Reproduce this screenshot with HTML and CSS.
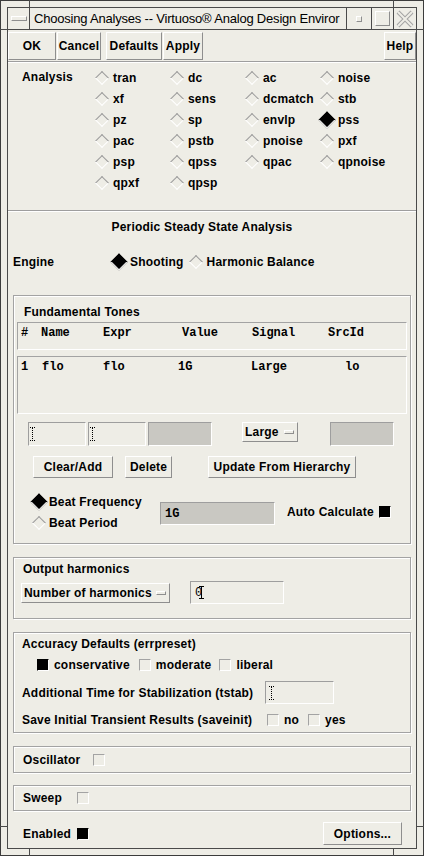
FILE: index.html
```html
<!DOCTYPE html>
<html lang="en">
<head>
<meta charset="utf-8">
<title>Choosing Analyses</title>
<link rel="stylesheet" href="styles.css">
</head>
<body>
<div class="frame">
  <span class="mark mark-t1"></span>
  <span class="mark mark-t2"></span>
  <span class="mark mark-b1"></span>
  <span class="mark mark-b2"></span>
  <span class="mark mark-l1"></span>
  <span class="mark mark-l2"></span>
  <span class="mark mark-r1"></span>
  <span class="mark mark-r2"></span>
  <div class="win">
    <div class="titlebar">
      <div class="tb-menu"><span class="tb-menu-bar"></span></div>
      <div class="tb-title">Choosing Analyses -- Virtuoso® Analog Design Enviror</div>
      <div class="tb-btn tb-btn-min"><span class="tb-min"></span></div>
      <div class="tb-btn"><span class="tb-max"></span></div>
      <div class="tb-btn tb-btn-close"><svg class="tb-x" width="18" height="18" viewBox="0 0 18 18"><path d="M2 2L16 16M16 2L2 16" stroke="#a3a3a3" stroke-width="4" fill="none"/><path d="M2 2L16 16M16 2L2 16" stroke="#eeede6" stroke-width="2" fill="none"/></svg></div>
    </div>
    <div class="content">
      <div class="actions">
        <div class="btn btn-ok">OK</div>
        <div class="btn btn-cancel">Cancel</div>
        <div class="btn btn-defaults">Defaults</div>
        <div class="btn btn-apply">Apply</div>
        <div class="btn btn-help">Help</div>
      </div>
      <div class="sep sep-top"></div>

      <div class="analysis">
        <div class="an-label">Analysis</div>
        <div class="an-grid">
          <div class="opt"><span class="radio"></span>tran</div>
          <div class="opt"><span class="radio"></span>dc</div>
          <div class="opt"><span class="radio"></span>ac</div>
          <div class="opt"><span class="radio"></span>noise</div>
          <div class="opt"><span class="radio"></span>xf</div>
          <div class="opt"><span class="radio"></span>sens</div>
          <div class="opt"><span class="radio"></span>dcmatch</div>
          <div class="opt"><span class="radio"></span>stb</div>
          <div class="opt"><span class="radio"></span>pz</div>
          <div class="opt"><span class="radio"></span>sp</div>
          <div class="opt"><span class="radio"></span>envlp</div>
          <div class="opt"><span class="radio on"></span>pss</div>
          <div class="opt"><span class="radio"></span>pac</div>
          <div class="opt"><span class="radio"></span>pstb</div>
          <div class="opt"><span class="radio"></span>pnoise</div>
          <div class="opt"><span class="radio"></span>pxf</div>
          <div class="opt"><span class="radio"></span>psp</div>
          <div class="opt"><span class="radio"></span>qpss</div>
          <div class="opt"><span class="radio"></span>qpac</div>
          <div class="opt"><span class="radio"></span>qpnoise</div>
          <div class="opt"><span class="radio"></span>qpxf</div>
          <div class="opt"><span class="radio"></span>qpsp</div>
        </div>
      </div>
      <div class="sep sep-mid"></div>

      <div class="heading">Periodic Steady State Analysis</div>

      <div class="engine">
        <div class="engine-label">Engine</div>
        <div class="opt"><span class="radio on"></span>Shooting</div>
        <div class="opt opt-hb"><span class="radio"></span>Harmonic Balance</div>
      </div>

      <div class="group group-tones">
        <div class="group-title tones-title">Fundamental Tones</div>
        <div class="tbl tbl-head">
          <span>#</span><span>Name</span><span>Expr</span><span>Value</span><span>Signal</span><span>SrcId</span>
        </div>
        <div class="tbl tbl-data">
          <span>1</span><span>flo</span><span>flo</span><span>1G</span><span>Large</span><span>lo</span>
        </div>
        <div class="tone-inputs">
          <div class="field f-name"><svg class="caret" width="5" height="14" viewBox="0 0 5 14"><path d="M0 .5H5M0 13.5H5" stroke="#000" stroke-width="1" stroke-dasharray="1 1"/><path d="M2.5 1V13" stroke="#000" stroke-width="1" stroke-dasharray="1 1"/></svg></div>
          <div class="field f-expr"><svg class="caret" width="5" height="14" viewBox="0 0 5 14"><path d="M0 .5H5M0 13.5H5" stroke="#000" stroke-width="1" stroke-dasharray="1 1"/><path d="M2.5 1V13" stroke="#000" stroke-width="1" stroke-dasharray="1 1"/></svg></div>
          <div class="field grey f-value"></div>
          <div class="menubtn mb-large">Large<span class="mb-ind"></span></div>
          <div class="field grey f-src"></div>
        </div>
        <div class="tone-btns">
          <div class="btn btn-sm btn-clear">Clear/Add</div>
          <div class="btn btn-sm btn-delete">Delete</div>
          <div class="btn btn-sm btn-update">Update From Hierarchy</div>
        </div>
        <div class="beat">
          <div class="beat-radios">
            <div class="opt"><span class="radio on"></span>Beat Frequency</div>
            <div class="opt"><span class="radio"></span>Beat Period</div>
          </div>
          <div class="field grey f-beat"><span class="mono">1G</span></div>
          <div class="autocalc">Auto Calculate<span class="chk on"></span></div>
        </div>
      </div>

      <div class="group group-out">
        <div class="group-title">Output harmonics</div>
        <div class="out-row">
          <div class="menubtn mb-harm">Number of harmonics<span class="mb-ind"></span></div>
          <div class="field f-harm"><span class="harm-val">0</span><svg class="ibeam" width="5" height="13" viewBox="0 0 5 13"><path d="M0 .5H5M0 12.5H5M2.5 0V13" stroke="#000" stroke-width="1"/></svg></div>
        </div>
      </div>

      <div class="group group-acc">
        <div class="group-title">Accuracy Defaults (errpreset)</div>
        <div class="acc-row">
          <span class="chk on"></span><span class="chk-text t-cons">conservative</span>
          <span class="chk"></span><span class="chk-text t-mod">moderate</span>
          <span class="chk"></span><span class="chk-text">liberal</span>
        </div>
        <div class="tstab-row">
          <span class="lbl-tstab">Additional Time for Stabilization (tstab)</span>
          <div class="field f-tstab"><svg class="caret" width="5" height="14" viewBox="0 0 5 14"><path d="M0 .5H5M0 13.5H5" stroke="#000" stroke-width="1" stroke-dasharray="1 1"/><path d="M2.5 1V13" stroke="#000" stroke-width="1" stroke-dasharray="1 1"/></svg></div>
        </div>
        <div class="save-row">
          <span class="lbl-save">Save Initial Transient Results (saveinit)</span>
          <span class="chk"></span><span class="chk-text t-no">no</span>
          <span class="chk"></span><span class="chk-text">yes</span>
        </div>
      </div>

      <div class="group group-osc">
        <span class="lbl-osc">Oscillator</span><span class="chk"></span>
      </div>

      <div class="group group-sweep">
        <span class="lbl-sweep">Sweep</span><span class="chk"></span>
      </div>

      <div class="bottom-row">
        <span class="lbl-sweep">Enabled</span><span class="chk on"></span>
        <div class="btn btn-options">Options...</div>
      </div>
    </div>
  </div>
</div>
</body>
</html>
```

FILE: styles.css
```css
* { box-sizing: border-box; margin: 0; padding: 0; }
html, body { width: 424px; height: 856px; overflow: hidden; }
body {
  background: #eeede6;
  font-family: "Liberation Sans", Arial, sans-serif;
  font-size: 12px;
  font-weight: bold;
  letter-spacing: 0.2px;
  color: #000;
}

/* window frame */
.frame {
  position: relative;
  width: 424px;
  height: 856px;
  border: 1px solid #3c3c3c;
  padding: 6px;
  background: #eeede6;
}
.mark { position: absolute; background: #4a4a4a; }
.mark-t1 { left: 28px; top: -1px; width: 1px; height: 7px; }
.mark-t2 { left: 392px; top: -1px; width: 1px; height: 7px; }
.mark-b1 { left: 28px; bottom: -1px; width: 1px; height: 7px; }
.mark-b2 { left: 392px; bottom: -1px; width: 1px; height: 7px; }
.mark-l1 { left: -1px; top: 28px; width: 7px; height: 1px; }
.mark-l2 { left: -1px; bottom: 28px; width: 7px; height: 1px; }
.mark-r1 { right: -1px; top: 28px; width: 7px; height: 1px; }
.mark-r2 { right: -1px; bottom: 28px; width: 7px; height: 1px; }

.win {
  height: 100%;
  border: 1px solid #4a4a4a;
  display: flex;
  flex-direction: column;
}

/* title bar */
.titlebar {
  display: flex;
  height: 22px;
  border-bottom: 1px solid #4a4a4a;
  flex: none;
}
.tb-menu {
  width: 22px;
  border-right: 1px solid #4a4a4a;
  display: flex;
  align-items: center;
  justify-content: center;
}
.tb-menu-bar {
  width: 16px;
  height: 5px;
  border: 1px solid;
  border-color: #fff #8e8e8e #8e8e8e #fff;
}
.tb-title {
  flex: 1;
  min-width: 0;
  padding-left: 4px;
  font-weight: normal;
  font-size: 13px;
  letter-spacing: -0.2px;
  line-height: 21px;
  white-space: nowrap;
  overflow: hidden;
}
.tb-btn {
  width: 22px;
  border-left: 1px solid #4a4a4a;
  display: flex;
  align-items: center;
  justify-content: center;
  flex: none;
}
.tb-btn-min { width: 25px; }
.tb-btn-close { width: 23px; }
.tb-min {
  width: 6px;
  height: 6px;
  border: 1px solid;
  border-color: #fff #8e8e8e #8e8e8e #fff;
}
.tb-max {
  width: 15px;
  height: 15px;
  border: 1px solid;
  border-color: #fff #8e8e8e #8e8e8e #fff;
}

/* content */
.content {
  flex: 1;
  display: flex;
  flex-direction: column;
}

.btn {
  display: flex;
  align-items: center;
  justify-content: center;
  border: 1px solid;
  border-color: #fff #8e8e8e #8e8e8e #fff;
  white-space: nowrap;
  flex: none;
}

.actions {
  display: flex;
  height: 28px;
  margin-top: 2px;
  flex: none;
}
.btn-ok { width: 48px; }
.btn-cancel { width: 44px; margin-left: 1px; }
.btn-defaults { width: 56px; margin-left: 5px; }
.btn-apply { width: 40px; margin-left: 1px; }
.btn-help { width: 32px; margin-left: auto; }

.sep {
  height: 2px;
  border-top: 1px solid #9e9e9e;
  border-bottom: 1px solid #fff;
  flex: none;
}
.sep-top { margin-top: 1px; }
.sep-mid { margin-top: 17px; }

/* analysis grid */
.analysis {
  display: flex;
  margin-top: 4px;
  padding-left: 14px;
}
.an-label { width: 73px; line-height: 21px; }
.an-grid {
  display: grid;
  grid-template-columns: repeat(4, 75px);
  grid-auto-rows: 21px;
}
.opt {
  display: flex;
  align-items: center;
  white-space: nowrap;
}
.radio {
  width: 13px;
  height: 13px;
  display: inline-flex;
  align-items: center;
  justify-content: center;
  flex: none;
  margin-right: 5px;
}
.radio::before {
  content: "";
  width: 8px;
  height: 8px;
  transform: rotate(45deg);
  border: 1px solid;
  border-color: #9b9b9b #fff #fff #9b9b9b;
}
.radio.on::before {
  width: 10px;
  height: 10px;
  background: #000;
  border-color: #000 #fff #fff #000;
}

.heading {
  margin-top: 7px;
  line-height: 16px;
  text-align: center;
  padding-right: 20px;
}

.engine {
  display: flex;
  align-items: center;
  height: 20px;
  margin-top: 17px;
  padding-left: 5px;
}
.engine-label { width: 99px; }
.opt-hb { margin-left: 6px; }
.opt-hb .radio { margin-right: 4px; }

/* group boxes */
.group {
  margin: 0 5px;
  border: 1px solid #a3a3a3;
  box-shadow: inset 1px 1px 0 #fff, 1px 1px 0 #fff;
  flex: none;
}
.group-title { line-height: 16px; padding-left: 9px; margin-top: 3px; }

.group-tones { margin-top: 23px; padding-bottom: 10px; }
.tones-title { margin-top: 8px; padding-left: 10px; }

.tbl {
  margin: 2px 3px 0;
  border: 1px solid;
  border-color: #a3a3a3 #fff #fff #a3a3a3;
  display: grid;
  font-family: "Liberation Mono", "Courier New", monospace;
  font-size: 12px;
  letter-spacing: 0;
  line-height: 14px;
  padding-left: 3px;
  padding-top: 3px;
}
.tbl-head {
  height: 28px;
  grid-template-columns: 20px 62px 79px 70px 76px auto;
}
.tbl-data {
  margin-top: 6px;
  height: 58px;
  grid-template-columns: 21px 61px 75px 73px 94px auto;
  align-content: start;
}

.tone-inputs {
  display: flex;
  align-items: flex-start;
  margin-top: 8px;
  padding-left: 14px;
}
.field {
  height: 24px;
  border: 1px solid;
  border-color: #9e9e9e #fff #fff #9e9e9e;
  flex: none;
  display: flex;
  align-items: center;
}
.field.grey { background: #c9c8c2; }
.caret { display: block; margin-left: 1px; }
.f-name { width: 58px; }
.f-expr { width: 58px; margin-left: 2px; }
.f-value { width: 64px; margin-left: 2px; }
.f-src { width: 64px; margin-left: 32px; }

.menubtn {
  display: flex;
  align-items: center;
  height: 20px;
  border: 1px solid;
  border-color: #fff #8e8e8e #8e8e8e #fff;
  padding-left: 2px;
  white-space: nowrap;
  flex: none;
}
.mb-ind {
  width: 10px;
  height: 4px;
  border: 1px solid;
  border-color: #fff #8e8e8e #8e8e8e #fff;
  margin-left: 5px;
}
.mb-large { width: 56px; margin-left: 30px; }

.tone-btns {
  display: flex;
  height: 22px;
  margin-top: 10px;
  padding-left: 19px;
}
.btn-clear { width: 80px; }
.btn-delete { width: 47px; margin-left: 12px; }
.btn-update { width: 148px; margin-left: 36px; }

.beat {
  display: flex;
  align-items: flex-start;
  margin-top: 13px;
  padding-left: 18px;
}
.beat-radios {
  width: 128px;
  display: grid;
  grid-auto-rows: 21px;
}
.beat-radios .radio { margin-right: 4px; }
.f-beat {
  width: 115px;
  height: 23px;
  margin-top: 11px;
  padding-left: 4px;
}
.mono {
  font-family: "Liberation Mono", "Courier New", monospace;
  letter-spacing: 0;
}
.autocalc {
  display: flex;
  align-items: center;
  margin-left: 12px;
  margin-top: 14px;
}
.autocalc .chk { margin-left: 5px; }

.chk {
  display: inline-block;
  width: 12px;
  height: 12px;
  border: 1px solid;
  border-color: #a3a3a3 #fff #fff #a3a3a3;
  flex: none;
}
.chk.on { background: #000; border-color: #000 #fff #fff #000; }

.group-out { margin-top: 13px; padding-bottom: 14px; }
.out-row {
  display: flex;
  align-items: center;
  margin-top: 4px;
  padding-left: 7px;
  height: 23px;
}
.mb-harm { width: 149px; }
.mb-harm .mb-ind { margin-left: 4px; }
.f-harm { width: 94px; height: 23px; margin-left: 20px; padding-left: 4px; }
.harm-val { font-family: "Liberation Mono", monospace; letter-spacing: 0; font-weight: normal; }
.ibeam { display: block; margin-left: -3px; }

.group-acc { margin-top: 13px; padding-bottom: 4px; }
.group-acc .group-title { padding-left: 8px; }
.acc-row {
  display: flex;
  align-items: center;
  height: 16px;
  margin-top: 5px;
  padding-left: 23px;
}
.chk-text { margin-left: 5px; }
.t-cons { margin-right: 9px; }
.t-mod { margin-right: 8px; }

.tstab-row {
  display: flex;
  align-items: center;
  margin-top: 8px;
  padding-left: 8px;
  height: 23px;
}
.lbl-tstab { width: 243px; }
.f-tstab { width: 69px; height: 23px; padding-left: 2px; }

.save-row {
  display: flex;
  align-items: center;
  height: 16px;
  margin-top: 8px;
  padding-left: 8px;
}
.lbl-save { width: 245px; white-space: nowrap; }
.t-no { margin-right: 9px; }

.group-osc, .group-sweep {
  display: flex;
  align-items: center;
  padding-left: 9px;
}
.group-osc { margin-top: 13px; height: 27px; }
.group-sweep { margin-top: 12px; height: 26px; }
.lbl-osc { width: 70px; }
.lbl-sweep { width: 54px; }

.bottom-row {
  display: flex;
  align-items: center;
  height: 23px;
  margin-top: 11px;
  padding-left: 15px;
  padding-right: 14px;
}
.btn-options { width: 79px; height: 23px; margin-left: auto; }
```
